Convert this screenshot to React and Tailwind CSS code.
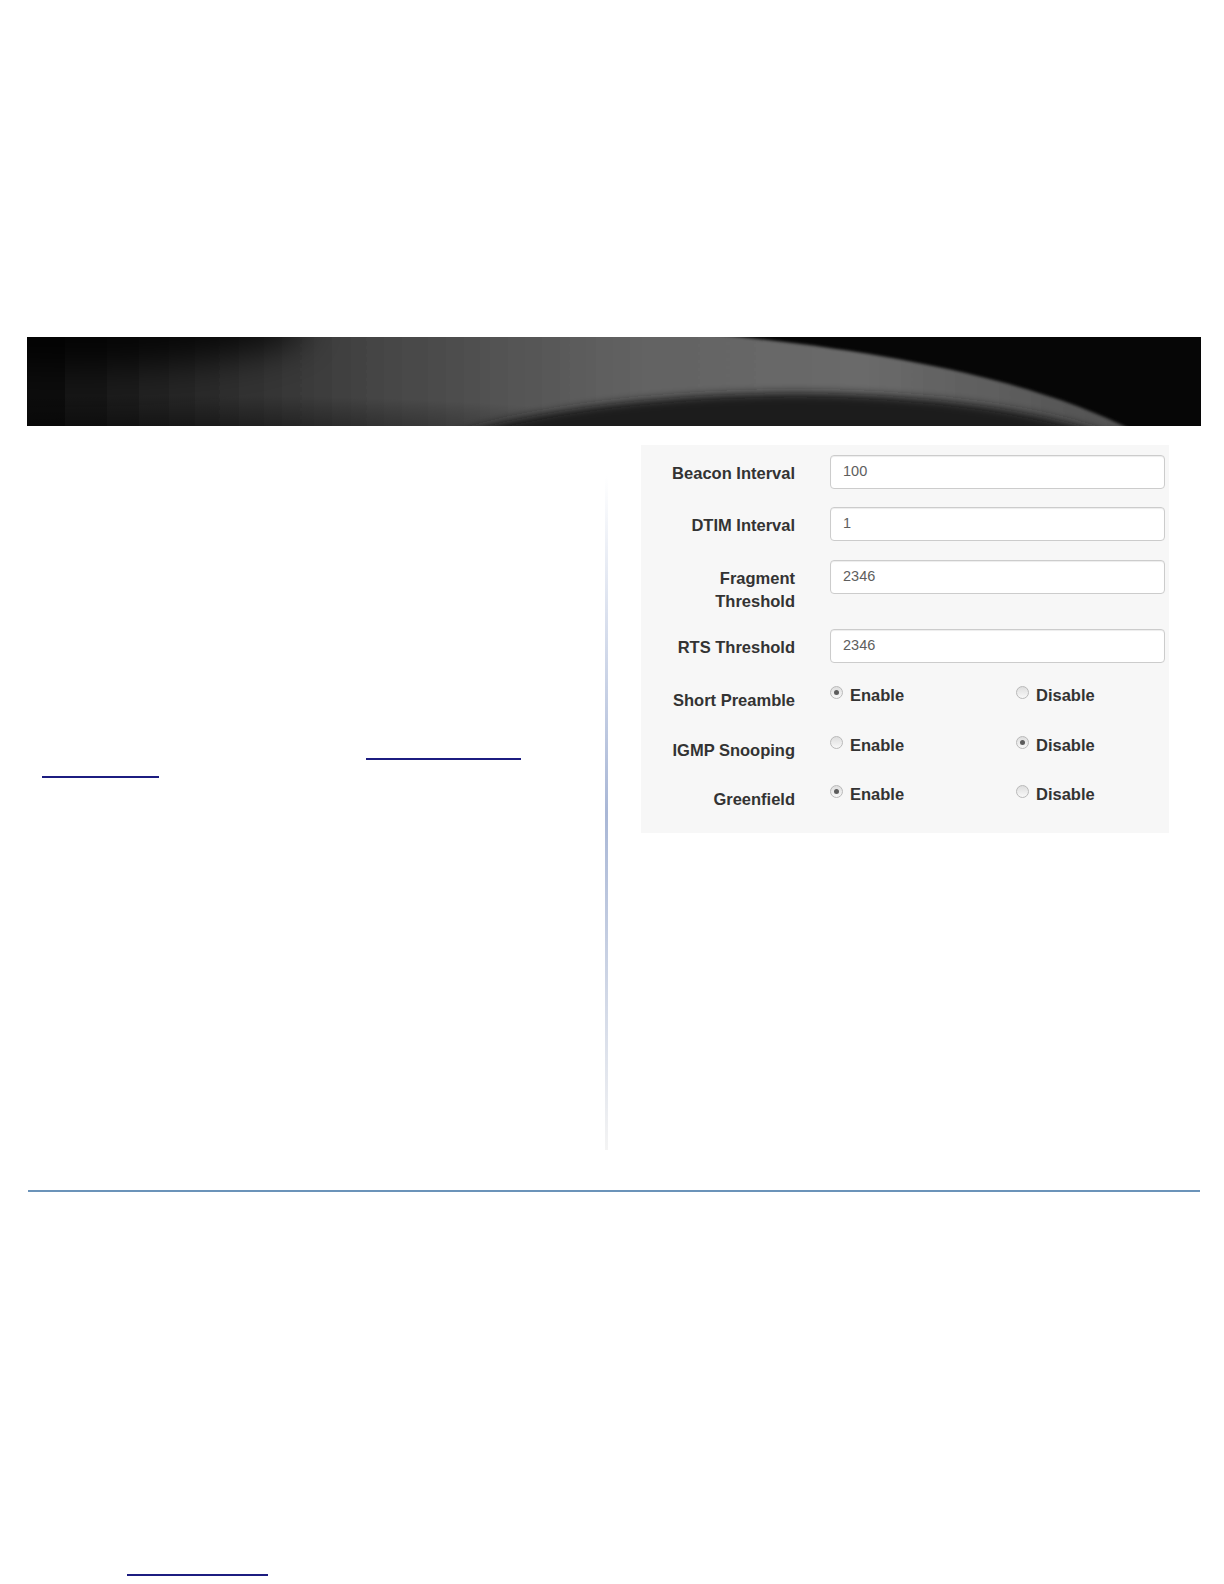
import React from 'react';

const font = { fontFamily: '"Liberation Sans", Arial, Helvetica, sans-serif' };

const Banner = () => (
    <svg width="1174" height="89" viewBox="0 0 1174 89" className="block">
        <defs>
            <linearGradient id="band" x1="0" y1="0" x2="1" y2="0">
                <stop offset="0" stopColor="#080808" />
                <stop offset="0.1" stopColor="#1e1e1e" />
                <stop offset="0.3" stopColor="#424242" />
                <stop offset="0.55" stopColor="#626262" />
                <stop offset="0.75" stopColor="#6a6a6a" />
                <stop offset="1" stopColor="#505050" />
            </linearGradient>
            <radialGradient id="shadeLeft" cx="0.12" cy="1.1" r="0.45">
                <stop offset="0" stopColor="#000" stopOpacity="0.5" />
                <stop offset="1" stopColor="#000" stopOpacity="0" />
            </radialGradient>
            <filter id="soft" x="-5%" y="-50%" width="110%" height="200%">
                <feGaussianBlur stdDeviation="1.4" />
            </filter>
            <filter id="blur" x="-10%" y="-100%" width="120%" height="300%">
                <feGaussianBlur stdDeviation="5" />
            </filter>
            <filter id="wide" x="-20%" y="-200%" width="140%" height="500%">
                <feGaussianBlur stdDeviation="18" />
            </filter>
        </defs>
        <rect width="1174" height="89" fill="#060606" />
        <path d="M -10 99 L -10 -10 L 590 -10 C 820 4, 1010 40, 1116 99 Z" fill="url(#band)" filter="url(#soft)" />
        <rect width="1174" height="89" fill="url(#shadeLeft)" />
        {/* top-left corner fades back into black */}
        <ellipse cx="40" cy="-10" rx="240" ry="40" fill="#050505" opacity="0.8" filter="url(#wide)" />
        <path d="M 420 100 C 520 70, 640 57, 770 56 C 900 57, 1010 72, 1090 100 Z" fill="#1c1c1c" filter="url(#blur)" />
    </svg>
);

const Label = ({ children }) => (
    <div className="w-[154px] shrink-0 text-right pt-[7px] leading-[22.5px] font-bold text-[16.5px] text-[#333333]">
        {children}
    </div>
);

const TextRow = ({ label, value, className = '' }) => (
    <div className={`flex items-start ${className}`}>
        <Label>{label}</Label>
        <div className="ml-[35px] w-[335px] h-[34px] bg-white border border-[#cccccc] rounded-[4px] shadow-[inset_0_1px_1px_rgba(0,0,0,0.075)] flex items-center pl-[12px] text-[14.5px] text-[#5e5e5e]">
            {value}
        </div>
    </div>
);

const Radio = ({ checked, text, className = '' }) => (
    <div className={`flex items-start ${className}`}>
        <div className="mt-[4px] w-[13px] h-[13px] rounded-full border border-[#b9b9b9] bg-gradient-to-b from-[#dedede] to-[#f8f8f8] flex items-center justify-center shrink-0">
            {checked && <div className="w-[5px] h-[5px] rounded-full bg-[#5c5c5c]" />}
        </div>
        <span className="ml-[7px] pt-[2px] leading-[22px] font-bold text-[16.5px] text-[#333333]">{text}</span>
    </div>
);

const RadioRow = ({ label, enabled, className = '' }) => (
    <div className={`flex items-start ${className}`}>
        <Label>{label}</Label>
        <div className="ml-[35px] flex">
            <Radio checked={enabled} text="Enable" className="w-[186px]" />
            <Radio checked={!enabled} text="Disable" />
        </div>
    </div>
);

export default function App() {
    return (
        <div className="w-[1224px] h-[1584px] bg-white overflow-hidden" style={font}>
            <div className="h-[337px]" />
            <div className="ml-[27px] w-[1174px] h-[89px]">
                <Banner />
            </div>

            <div className="flex h-[764px]">
                <div className="w-[605px] shrink-0 pt-[332px]">
                    <div className="ml-[366px] w-[155px] h-[2px] bg-[#1c1c80]" />
                    <div className="mt-[16px] ml-[42px] w-[117px] h-[2px] bg-[#1c1c80]" />
                </div>
                <div className="mt-[50px] w-[3px] h-[674px] bg-gradient-to-b from-[#ffffff] via-[#a9b7d6] to-[#f4f4f4] shrink-0" />
                <div className="ml-[33px] mt-[19px]">
                    <div className="w-[528px] bg-[#f7f7f7] pt-[10px] pb-[22px]">
                        <TextRow label="Beacon Interval" value="100" />
                        <TextRow label="DTIM Interval" value="1" className="mt-[18px]" />
                        <TextRow
                            label={<>Fragment<br />Threshold</>}
                            value="2346"
                            className="mt-[19px]"
                        />
                        <TextRow label="RTS Threshold" value="2346" className="mt-[17px]" />
                        <RadioRow label="Short Preamble" enabled className="mt-[19px]" />
                        <RadioRow label="IGMP Snooping" enabled={false} className="mt-[20px]" />
                        <RadioRow label="Greenfield" enabled className="mt-[20px]" />
                    </div>
                </div>
            </div>

            <div className="ml-[28px] w-[1172px] h-[2px] bg-[#6b93b9]" />
            <div className="mt-[382px] ml-[127px] w-[141px] h-[2px] bg-[#1c1c80]" />
        </div>
    );
}
